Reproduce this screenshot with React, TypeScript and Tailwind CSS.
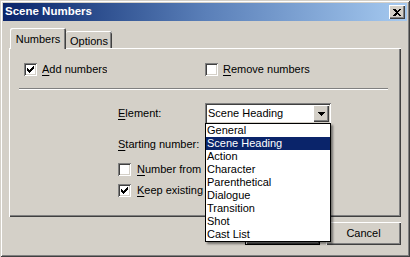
import React from 'react'

const raised =
  'shadow-[inset_1px_1px_0_#ffffff,inset_-1px_-1px_0_#404040,inset_-2px_-2px_0_#808080]'
const sunken =
  'shadow-[inset_1px_1px_0_#808080,inset_-1px_-1px_0_#ffffff,inset_2px_2px_0_#404040,inset_-2px_-2px_0_#d4d0c8]'

const items = [
  'General',
  'Scene Heading',
  'Action',
  'Character',
  'Parenthetical',
  'Dialogue',
  'Transition',
  'Shot',
  'Cast List',
]

function Check() {
  return (
    <svg width="7" height="7" viewBox="0 0 7 7" shapeRendering="crispEdges">
      <rect x="0" y="2" width="1" height="3" fill="#000" />
      <rect x="1" y="3" width="1" height="3" fill="#000" />
      <rect x="2" y="4" width="1" height="3" fill="#000" />
      <rect x="3" y="3" width="1" height="3" fill="#000" />
      <rect x="4" y="2" width="1" height="3" fill="#000" />
      <rect x="5" y="1" width="1" height="3" fill="#000" />
      <rect x="6" y="0" width="1" height="3" fill="#000" />
    </svg>
  )
}

function Checkbox({
  checked,
  hotkey,
  rest,
  gap,
  clip,
}: {
  checked?: boolean
  hotkey: string
  rest: string
  gap: string
  clip?: string
}) {
  return (
    <div className={`flex items-center h-[13px] ${gap}`}>
      <div className={`shrink-0 w-[13px] h-[13px] bg-white flex items-center justify-center ${sunken}`}>
        {checked && <Check />}
      </div>
      <div className={`overflow-hidden ${clip ?? ''}`}>
        <span className="whitespace-nowrap leading-[13px]">
          <span className="underline underline-offset-2">{hotkey}</span>
          {rest}
        </span>
      </div>
    </div>
  )
}

export default function App() {
  return (
    <div
      className="relative w-[410px] h-[257px] p-[3px] bg-[#d4d0c8] flex flex-col text-[11px] text-black shadow-[inset_1px_1px_0_#d4d0c8,inset_-1px_-1px_0_#404040,inset_2px_2px_0_#ffffff,inset_-2px_-2px_0_#808080]"
      style={{ fontFamily: '"Liberation Sans", Arial, sans-serif' }}
    >
      {/* title bar */}
      <div className="h-[18px] flex items-center justify-between bg-linear-to-r from-[#0a246a] via-[#5a7fb8] to-[#a6caf0]">
        <span className="pl-[2px] font-bold text-white text-[11.5px]">Scene Numbers</span>
        <div className={`mr-[2px] w-[16px] h-[14px] bg-[#d4d0c8] flex items-center justify-center ${raised}`}>
          <svg width="8" height="7" viewBox="0 0 8 7" shapeRendering="crispEdges">
            <path d="M0 0h2l2 2 2-2h2L5 3.5 8 7H6L4 5 2 7H0l3-3.5z" fill="#000" />
          </svg>
        </div>
      </div>

      {/* body */}
      <div className="flex-1 flex flex-col px-[6px] pt-[7px]">
        {/* tabs */}
        <div className="flex items-end h-[20px]">
          <div className="relative z-10 ml-px -mb-px w-[56px] h-[21px] bg-[#d4d0c8] rounded-t-[2px] flex items-start justify-center pt-[3px] shadow-[inset_1px_1px_0_#ffffff,inset_-1px_0_0_#404040,inset_-2px_0_0_#808080]">
            Numbers
          </div>
          <div className="w-[46px] h-[17px] bg-[#d4d0c8] rounded-t-[2px] flex items-start justify-center pt-[2px] shadow-[inset_0_1px_0_#ffffff,inset_-1px_0_0_#404040,inset_-2px_0_0_#808080]">
            Options
          </div>
        </div>

        {/* panel */}
        <div className={`w-[392px] h-[169px] flex flex-col ${raised}`}>
          <div className="grid grid-cols-[181px_1fr] pl-[15px] pt-[15px]">
            <Checkbox checked hotkey="A" rest="dd numbers" gap="gap-[5px]" />
            <Checkbox hotkey="R" rest="emove numbers" gap="gap-[5px]" />
          </div>
          <div className="ml-[10px] mt-[12px] w-[369px] border-t border-t-[#808080] border-b border-b-white" />

          <div className="pl-[109px] mt-[13px] flex flex-col">
            <div className="flex items-center h-[21px]">
              <span className="w-[87px]">
                <span className="underline underline-offset-2">E</span>lement:
              </span>
              <div className={`w-[126px] h-[21px] bg-white flex items-center justify-between p-[2px] ${sunken}`}>
                <span className="pl-[1px]">Scene Heading</span>
                <div className={`w-[16px] h-[17px] bg-[#d4d0c8] flex items-center justify-center ${raised}`}>
                  <svg width="7" height="4" viewBox="0 0 7 4" shapeRendering="crispEdges">
                    <path d="M0 0h7L3.5 4z" fill="#000" />
                  </svg>
                </div>
              </div>
            </div>
            <div className="flex items-center h-[21px] mt-[10px]">
              <span className="w-[87px]">
                <span className="underline underline-offset-2">S</span>tarting number:
              </span>
              <div className={`w-[60px] h-[21px] bg-white ${sunken}`} />
            </div>
            <div className="mt-[8px]">
              <Checkbox hotkey="N" rest="umber from current scene" gap="gap-[6px]" clip="w-[67px]" />
            </div>
            <div className="mt-[8px]">
              <Checkbox checked hotkey="K" rest="eep existing numbers" gap="gap-[6px]" clip="w-[67px]" />
            </div>
          </div>
        </div>

        {/* buttons */}
        <div className="mt-[5px] flex justify-end gap-[6px]">
          <div className="w-[75px] h-[23px] border border-black bg-[#d4d0c8] flex items-center justify-center shadow-[inset_1px_1px_0_#ffffff,inset_-1px_-1px_0_#404040,inset_-2px_-2px_0_#808080]">
            OK
          </div>
          <div className={`w-[75px] h-[23px] bg-[#d4d0c8] flex items-center justify-center ${raised}`}>
            Cancel
          </div>
        </div>
      </div>

      {/* open dropdown list */}
      <div className="absolute left-[205px] top-[123px] w-[126px] border border-black bg-white shadow-[2px_2px_2px_rgba(0,0,0,0.45)]">
        {items.map((it) => (
          <div
            key={it}
            className={`h-[13px] leading-[13px] pl-[1px] ${it === 'Scene Heading' ? 'bg-[#0a246a] text-white' : ''}`}
          >
            {it}
          </div>
        ))}
      </div>
    </div>
  )
}
